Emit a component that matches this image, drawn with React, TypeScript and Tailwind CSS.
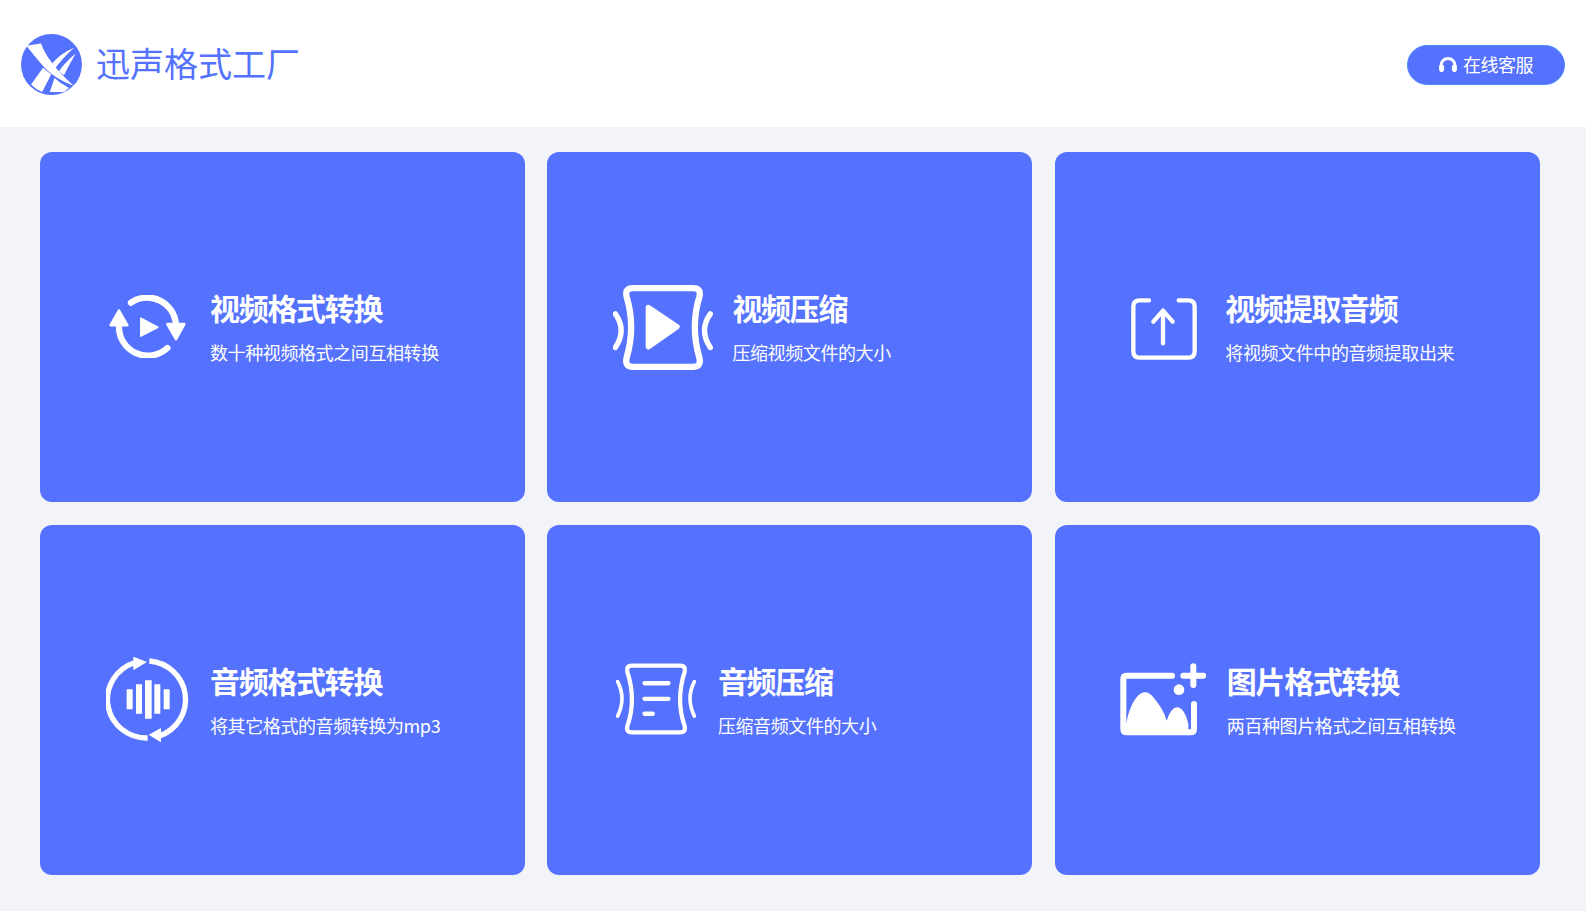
import React from 'react';

const IconConvert = () => (
  <svg viewBox="57 75 230 190" className="w-[77px] h-[63px]" fill="none" stroke="#fff" strokeLinecap="round" strokeLinejoin="round">
    <path d="M122 98 A87 87 0 0 1 258 165" strokeWidth="19" />
    <path d="M232 235 A87 87 0 0 1 86 170" strokeWidth="19" />
    <path d="M232 163 H283 L258 208 Z" fill="#fff" strokeWidth="8" />
    <path d="M61 166 H111 L86 122 Z" fill="#fff" strokeWidth="8" />
    <path d="M152 145 L203 172 L152 199 Z" fill="#fff" strokeWidth="5" />
  </svg>
);

const IconVideoCompress = () => (
  <svg viewBox="40 45 300 254" className="w-[100px] h-[85px]" fill="none" stroke="#fff" strokeLinecap="round" strokeLinejoin="round">
    <path d="M100 54 H280 Q306 54 299 80 Q272 170 299 262 Q306 290 280 290 H100 Q74 290 81 262 Q108 170 81 80 Q74 54 100 54 Z" strokeWidth="19" />
    <path d="M146 112 L232 170 L146 230 Z" fill="#fff" strokeWidth="16" />
    <path d="M47 131 Q82 180 47 232" strokeWidth="16" />
    <path d="M332 131 Q297 180 332 232" strokeWidth="16" />
  </svg>
);

const IconExtract = () => (
  <svg viewBox="64 84 198 186" className="w-[66px] h-[62px]" fill="none" stroke="#fff" strokeWidth="13" strokeLinecap="round" strokeLinejoin="round">
    <path d="M118 91 H90 Q71 91 71 110 V244 Q71 263 90 263 H236 Q255 263 255 244 V110 Q255 91 236 91 H207" />
    <path d="M160 220 V122 M131 155 L160 122 L189 155" />
  </svg>
);

const IconAudioConvert = () => (
  <svg viewBox="45 35 252 255" className="w-[84px] h-[85px]" fill="none" stroke="#fff">
    <path d="M175 47 A118 116 0 0 1 205 272" strokeWidth="16" />
    <path d="M170 278 A118 116 0 0 1 130 52" strokeWidth="16" />
    <path d="M127 34 L168 50 L127 75 Z" fill="#fff" stroke="none" />
    <path d="M210 248 L173 268 L210 291 Z" fill="#fff" stroke="none" />
    <path d="M107 132 H125 V192 H107 Z M135 117 H153 V205 H135 Z M162 105 H182 V220 H162 Z M190 117 H208 V205 H190 Z M218 132 H236 V192 H218 Z" fill="#fff" stroke="none" />
  </svg>
);

const IconAudioCompress = () => (
  <svg viewBox="47 55 241 215" className="w-[80px] h-[72px]" fill="none" stroke="#fff" strokeLinecap="round" strokeLinejoin="round">
    <path d="M95 62 H240 Q258 62 254 80 Q226 165 254 245 Q258 263 240 263 H95 Q77 263 81 245 Q109 165 81 80 Q77 62 95 62 Z" strokeWidth="13" />
    <path d="M133 115 H205 M133 162 H205 M133 207 H158" strokeWidth="13" />
    <path d="M52 110 Q78 160 52 214" strokeWidth="11" />
    <path d="M283 110 Q257 160 283 214" strokeWidth="11" />
  </svg>
);

const IconImage = () => (
  <svg viewBox="30 52 258 219" className="w-[86px] h-[73px]" fill="none" stroke="#fff" strokeLinecap="round" strokeLinejoin="round">
    <path d="M186 90 H50 Q40 90 40 100 V250 Q40 260 50 260 H242 Q252 260 252 250 V175" strokeWidth="18" />
    <path d="M45 255 Q55 185 80 155 Q105 125 130 155 Q160 190 170 225 Q185 180 205 185 Q225 190 235 235 V255 Z" fill="#fff" stroke="none" />
    <path d="M250 62 V118 M220 90 H280" strokeWidth="18" />
    <circle cx="207" cy="132" r="16" fill="#fff" stroke="none" />
  </svg>
);

const Logo = () => (
  <svg viewBox="32 27 182 182" className="w-[61px] h-[61px] shrink-0">
    <circle cx="123" cy="118" r="91" fill="#5572ff" />
    <path d="M48 62 L92 55 Q110 110 190 182 Q130 160 100 125 Q70 90 48 62 Z" fill="#fff" />
    <path d="M190 68 Q150 85 125 115 L135 128 Q155 100 190 68 Z" fill="#fff" />
    <path d="M195 85 Q165 110 145 138 L160 150 Q175 120 195 85 Z" fill="#fff" />
    <path d="M98 128 L62 178 Q75 192 95 200 L122 148 Z" fill="#fff" />
    <path d="M132 158 L118 200 H160 L175 188 Q150 175 132 158 Z" fill="#fff" />
  </svg>
);

const tools = [
  { title: '视频格式转换', desc: '数十种视频格式之间互相转换', icon: <IconConvert />, pad: 'pl-[69px]', gap: 'gap-[24px]', nudge: 'mb-[1px]' },
  { title: '视频压缩', desc: '压缩视频文件的大小', icon: <IconVideoCompress />, pad: 'pl-[66px]', gap: 'gap-[19px]', nudge: '' },
  { title: '视频提取音频', desc: '将视频文件中的音频提取出来', icon: <IconExtract />, pad: 'pl-[76px]', gap: 'gap-[28.5px]', nudge: 'mt-[4px]' },
  { title: '音频格式转换', desc: '将其它格式的音频转换为mp3', icon: <IconAudioConvert />, pad: 'pl-[66px]', gap: 'gap-[20px]', nudge: 'mb-[2px]' },
  { title: '音频压缩', desc: '压缩音频文件的大小', icon: <IconAudioCompress />, pad: 'pl-[69px]', gap: 'gap-[21.5px]', nudge: 'mb-[3px]' },
  { title: '图片格式转换', desc: '两百种图片格式之间互相转换', icon: <IconImage />, pad: 'pl-[65px]', gap: 'gap-[21px]', nudge: 'mb-[1px]' },
];

const App: React.FC = () => {
  return (
    <div className="min-h-[911px] bg-[#f3f4fa] font-['Noto_Sans_CJK_SC','Liberation_Sans',sans-serif]">
      <header className="h-[127px] bg-white flex items-center justify-between pt-[2px] pl-[21px] pr-[21px]">
        <div className="flex items-center gap-[14px]">
          <Logo />
          <span className="mb-[4px] text-[34px] leading-none text-[#5572ff]">迅声格式工厂</span>
        </div>
        <button className="w-[158px] h-[40px] pb-[1px] pl-[1px] rounded-full bg-[#5572ff] text-white flex items-center justify-center gap-[4px] text-[18px] tracking-[-0.5px] border border-[#4f8cff]">
          <svg viewBox="0 0 20 15" className="w-[20px] h-[15px] ml-[-2px] mr-[1px]" fill="none" stroke="#fff" strokeLinecap="round">
            <path d="M3 11 V8.5 A7 7 0 0 1 17 8.5 V11" strokeWidth="3" />
            <path d="M3.6 10 V12.6 M16.4 10 V12.6" strokeWidth="5" />
          </svg>
          在线客服
        </button>
      </header>
      <main className="grid grid-cols-[485px_485px_485px] gap-x-[22.4px] gap-y-[23px] pl-[40px] pr-[46px] pt-[25px] pb-[36px]">
        {tools.map((tool) => (
          <div key={tool.title} className={`h-[350px] rounded-[12px] bg-[#5572ff] flex items-center text-white ${tool.pad} ${tool.gap}`}>
            <div className={`shrink-0 ${tool.nudge}`}>{tool.icon}</div>
            <div className="mt-[-2px]">
              <div className="text-[30px] leading-[40px] font-bold tracking-[-1.3px] whitespace-nowrap">{tool.title}</div>
              <div className="mt-[12px] text-[18px] leading-[26px] tracking-[-0.4px] whitespace-nowrap">{tool.desc}</div>
            </div>
          </div>
        ))}
      </main>
    </div>
  );
};

export default App;
